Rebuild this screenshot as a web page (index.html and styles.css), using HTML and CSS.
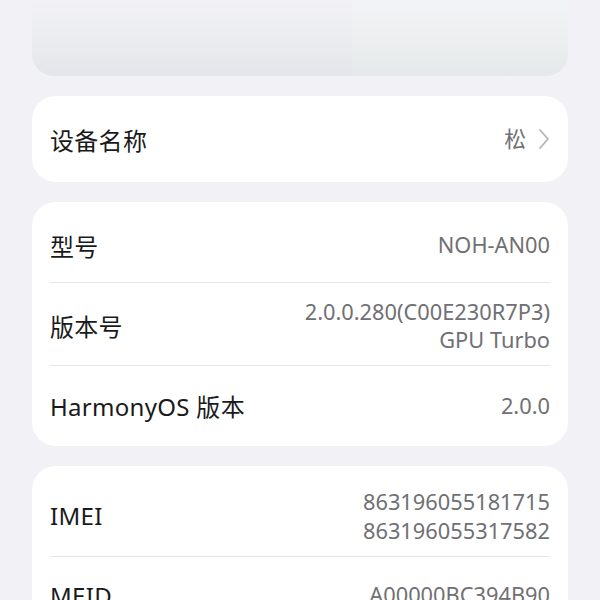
FILE: index.html
```html
<!DOCTYPE html>
<html lang="zh-CN">
<head>
<meta charset="utf-8">
<title>关于手机</title>
<link rel="stylesheet" href="styles.css">
</head>
<body>
<div class="page">
  <div class="hero">
    <div class="hero-left"></div>
    <div class="hero-right"></div>
  </div>

  <div class="card">
    <div class="row">
      <div class="label">设备名称</div>
      <div class="value-link">
        <span class="value">松</span>
        <svg class="chev" width="12" height="22" viewBox="0 0 12 22"><path d="M2 2 L10 11 L2 20" fill="none" stroke="#b4b4b8" stroke-width="1.8" stroke-linecap="round" stroke-linejoin="round"/></svg>
      </div>
    </div>
  </div>

  <div class="card">
    <div class="row r-model">
      <div class="label">型号</div>
      <div class="value">NOH-AN00</div>
    </div>
    <div class="row r-build">
      <div class="label">版本号</div>
      <div class="value">2.0.0.280(C00E230R7P3)<br>GPU Turbo</div>
    </div>
    <div class="row r-os">
      <div class="label">HarmonyOS 版本</div>
      <div class="value">2.0.0</div>
    </div>
  </div>

  <div class="card">
    <div class="row r-imei">
      <div class="label">IMEI</div>
      <div class="value">863196055181715<br>863196055317582</div>
    </div>
    <div class="row r-meid">
      <div class="label">MEID</div>
      <div class="value">A00000BC394B90</div>
    </div>
  </div>
</div>
</body>
</html>
```
FILE: styles.css
```css
html, body {
  margin: 0;
  padding: 0;
  background: #f1f1f6;
  font-family: "Noto Sans", "Noto Sans CJK SC", sans-serif;
}
.page {
  padding: 0 32px;
  display: flex;
  flex-direction: column;
  gap: 20px;
  height: 600px;
  overflow: hidden;
}
.hero {
  flex: none;
  height: 76px;
  border-radius: 0 0 22px 22px;
  display: flex;
  overflow: hidden;
  background: #eceef1;
}
.hero-left {
  flex: 1;
  background: linear-gradient(180deg, #f1f1f6 0%, #e9eaee 70%, #e4e5ea 100%);
}
.hero-right {
  width: 216px;
  background: linear-gradient(180deg, #f2f3f6 0%, #eaedee 70%, #e5e8e8 100%);
}
.card {
  flex: none;
  background: #ffffff;
  border-radius: 24px;
  padding: 0 18px;
}
.row {
  box-sizing: border-box;
  display: flex;
  align-items: center;
  justify-content: space-between;
  height: 86px;
  border-bottom: 1px solid #e6e6ea;
}
.row:last-child {
  border-bottom: none;
}
.r-model { height: 81px; padding-top: 6px; }
.r-build { height: 83px; padding-top: 3px; }
.r-os { height: 80px; padding-bottom: 1px; }
.r-imei { height: 91px; padding-top: 9px; }
.r-imei .value { line-height: 29px; }
.r-meid { padding-bottom: 10px; }
.label {
  font-size: 24px;
  color: #1a1a1c;
  letter-spacing: 0.3px;
}
.value {
  font-size: 21.8px;
  line-height: 28px;
  color: #707074;
  text-align: right;
}
.value-link {
  display: flex;
  align-items: center;
  gap: 12px;
}
.chev {
  display: block;
}
```
